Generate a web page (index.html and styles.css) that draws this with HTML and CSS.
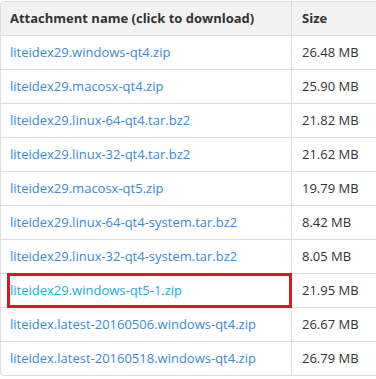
FILE: index.html
```html
<!DOCTYPE html>
<html lang="en">
<head>
  <meta charset="UTF-8" />
  <title>Attachments</title>
  <link rel="stylesheet" href="styles.css">
</head>
<body>
  <table class="files">
    <thead>
      <tr>
        <th class="name">Attachment name (click to download)</th>
        <th class="size">Size</th>
      </tr>
    </thead>
    <tbody>
      <tr><td class="name"><a href="#">liteidex29.windows-qt4.zip</a></td><td class="size">26.48 MB</td></tr>
      <tr><td class="name"><a href="#">liteidex29.macosx-qt4.zip</a></td><td class="size">25.90 MB</td></tr>
      <tr><td class="name"><a href="#">liteidex29.linux-64-qt4.tar.bz2</a></td><td class="size">21.82 MB</td></tr>
      <tr><td class="name"><a href="#">liteidex29.linux-32-qt4.tar.bz2</a></td><td class="size">21.62 MB</td></tr>
      <tr><td class="name"><a href="#">liteidex29.macosx-qt5.zip</a></td><td class="size">19.79 MB</td></tr>
      <tr><td class="name"><a href="#">liteidex29.linux-64-qt4-system.tar.bz2</a></td><td class="size">8.42 MB</td></tr>
      <tr><td class="name"><a href="#">liteidex29.linux-32-qt4-system.tar.bz2</a></td><td class="size">8.05 MB</td></tr>
      <tr class="marked"><td class="name"><a href="#">liteidex29.windows-qt5-1.zip</a></td><td class="size">21.95 MB</td></tr>
      <tr><td class="name"><a href="#">liteidex.latest-20160506.windows-qt4.zip</a></td><td class="size">26.67 MB</td></tr>
      <tr><td class="name"><a href="#">liteidex.latest-20160518.windows-qt4.zip</a></td><td class="size">26.79 MB</td></tr>
    </tbody>
  </table>
</body>
</html>
```

FILE: styles.css
```css
body {
  margin: 0;
  padding-top: 1px;
  background: white;
  color: #333;
  font-family: 'Open Sans', Lato, sans-serif;
  font-size: 13px;
  overflow: hidden;
}

.files {
  border-collapse: separate;
  border-spacing: 0;
  border: 1px solid #ddd;
  border-radius: 4px;
  width: 400px;
}

.files th,
.files td {
  text-align: left;
  padding: 6px 9px 6px 9px;
  line-height: 21px;
  border-bottom: 1px solid #ddd;
  white-space: nowrap;
}

.files tbody tr:last-child td {
  border-bottom: none;
}

.files th {
  background: #f2f2f2;
  font-weight: bold;
}

.files thead th:first-child {
  border-top-left-radius: 4px;
}

.files .name {
  width: 272px;
  border-right: 1px solid #ddd;
}

.files .size {
  padding-left: 10px;
}

.files a {
  color: #3a8ad4;
  text-decoration: none;
}

/* red highlight box drawn over the marked row */
.marked .name {
  position: relative;
}

.marked .name::after {
  content: '';
  position: absolute;
  left: 6px;
  top: -1px;
  right: -1px;
  bottom: -1px;
  border: 3px solid #e3141f;
}

.marked a {
  color: #14aee6;
}
```
